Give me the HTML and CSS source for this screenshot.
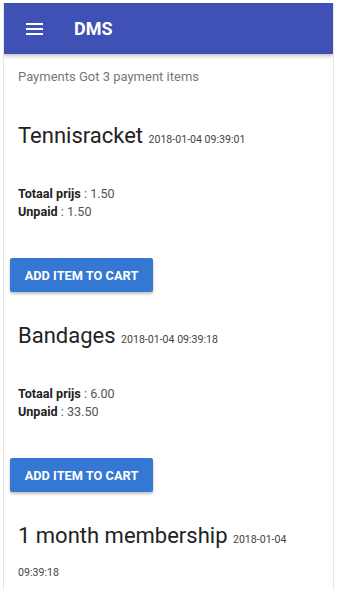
FILE: index.html
```html
<!DOCTYPE html>
<html lang="en">
<head>
  <meta charset="UTF-8" />
  <title>DMS</title>
  <link rel="stylesheet" href="styles.css">
</head>
<body>
  <div class="frame">
    <header class="topbar">
      <span class="menu">
        <svg width="17" height="12" viewBox="0 0 17 12">
          <rect x="0" y="0" width="17" height="2" fill="#fff"/>
          <rect x="0" y="5" width="17" height="2" fill="#fff"/>
          <rect x="0" y="10" width="17" height="2" fill="#fff"/>
        </svg>
      </span>
      <span class="brand">DMS</span>
    </header>

    <main class="content">
      <p class="summary">Payments Got 3 payment items</p>

      <section class="item">
        <h3 class="title">Tennisracket <span class="date">2018-01-04 09:39:01</span></h3>
        <p class="line"><strong>Totaal prijs</strong> : 1.50</p>
        <p class="line"><strong>Unpaid</strong> : 1.50</p>
        <button class="btn">Add item to cart</button>
      </section>

      <section class="item">
        <h3 class="title">Bandages <span class="date">2018-01-04 09:39:18</span></h3>
        <p class="line"><strong>Totaal prijs</strong> : 6.00</p>
        <p class="line"><strong>Unpaid</strong> : 33.50</p>
        <button class="btn">Add item to cart</button>
      </section>

      <section class="item">
        <h3 class="title">1 month membership <span class="date">2018-01-04 09:39:18</span></h3>
        <p class="line"><strong>Totaal prijs</strong> : 30.00</p>
        <p class="line"><strong>Unpaid</strong> : 30.00</p>
        <button class="btn">Add item to cart</button>
      </section>
    </main>
  </div>
</body>
</html>
```

FILE: styles.css
```css
body {
  margin: 0;
  padding: 3px 0 0 3px;
  font-family: Roboto, 'Noto Sans', sans-serif;
  background: #fff;
  overflow: hidden;
}
.frame {
  width: 331px;
  border-left: 1px solid #e6e6e6;
  border-right: 1px solid #e6e6e6;
  height: 587px;
  box-sizing: border-box;
  overflow: hidden;
}
.topbar {
  height: 51px;
  background-color: #3f51b5;
  color: white;
  display: flex;
  align-items: center;
  margin: 0 -1px;
  box-shadow: 0 2px 4px rgba(0,0,0,0.25);
  position: relative;
}
.menu {
  display: flex;
  margin-left: 23px;
  margin-top: 1px;
}
.brand {
  margin-left: 31px;
  font-size: 18px;
  font-weight: 700;
}
.content {
  padding: 14px 6px 0 6px;
}
.summary {
  margin: 0 0 0 8px;
  font-size: 13px;
  line-height: 18px;
  color: #777;
}
.title {
  margin: 33px 0 33px 8px;
  font-size: 22px;
  font-weight: 400;
  line-height: 33px;
  color: #222;
}
.item + .item .title {
  margin-top: 27px;
}
.date {
  font-size: 10.6px;
  line-height: 1;
  color: #444;
}
.line {
  margin: 0 0 0 8px;
  font-size: 12.6px;
  line-height: 18px;
  color: #555;
}
.line strong {
  color: #222;
}
.btn {
  margin-top: 37px;
  height: 34px;
  width: 143px;
  background-color: #3478d4;
  color: white;
  border: none;
  border-radius: 2px;
  font-family: Roboto, sans-serif;
  font-size: 12.8px;
  font-weight: 700;
  text-transform: uppercase;
  box-shadow: 0 2px 3px rgba(0,0,0,0.25);
  padding: 0;
}
```
